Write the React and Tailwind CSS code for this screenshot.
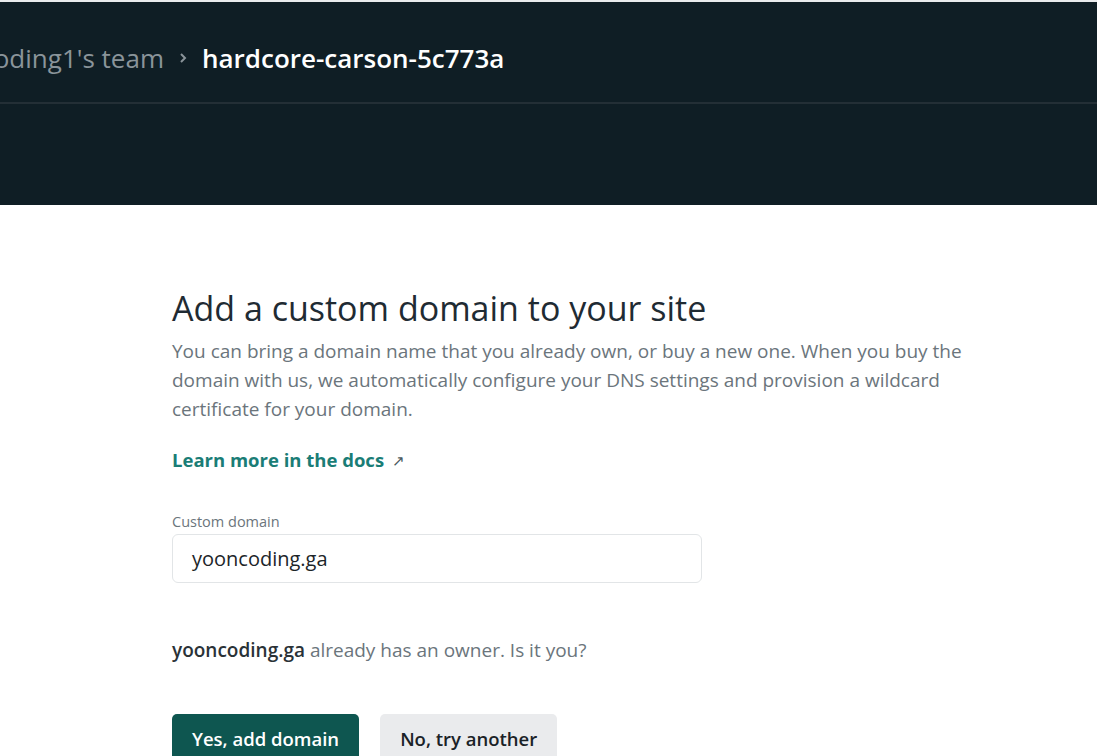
export default function App() {
  return (
    <div
      className="min-h-screen w-full bg-white overflow-hidden"
      style={{ fontFamily: '"Open Sans", "Noto Sans", sans-serif' }}
    >
      <div className="h-[2px] bg-[#e9ebed]" />
      <header className="bg-[#0f1e25]">
        <div className="flex h-[102px] items-center border-b-2 border-[#232f36] pt-[12px]">
          <div className="flex items-center gap-[14px] -ml-[79px] text-[26px] whitespace-nowrap">
            <span className="text-[#8a949a]">yooncoding1's team</span>
            <svg width="10" height="14" viewBox="0 0 10 14" className="text-[#8a949a]">
              <path d="M3 3 L7 7 L3 11" fill="none" stroke="currentColor" strokeWidth="2" />
            </svg>
            <span className="font-semibold text-white">hardcore-carson-5c773a</span>
          </div>
        </div>
        <div className="h-[101px]" />
      </header>

      <main className="pl-[172px] pt-[82px]">
        <h1 className="text-[34px] leading-[42px] text-[#1f2b33]">
          Add a custom domain to your site
        </h1>
        <p className="mt-[8px] max-w-[810px] text-[19px] leading-[29px] text-[#6b757c]">
          You can bring a domain name that you already own, or buy a new one. When you buy the
          domain with us, we automatically configure your DNS settings and provision a wildcard
          certificate for your domain.
        </p>
        <a className="mt-[23px] flex items-center gap-2 text-[18.5px] leading-[26px] font-bold text-[#1a7d76]">
          Learn more in the docs
          <span className="text-[15px] font-normal text-[#4a5a60]">↗</span>
        </a>

        <label className="mt-[39px] block text-[14.5px] leading-[20px] text-[#6b757c]">
          Custom domain
        </label>
        <div className="mt-[2px] flex h-[49px] w-[530px] items-center rounded-[6px] border border-[#e2e5e7] px-[19px] text-[20px] font-medium text-[#1c2529]">
          yooncoding.ga
        </div>

        <p className="mt-[54px] text-[19px] leading-[26px] text-[#6b757c]">
          <span className="font-semibold text-[#2a3237]">yooncoding.ga</span> already has an owner.
          Is it you?
        </p>

        <div className="mt-[51px] flex gap-[21px]">
          <button className="h-[50px] rounded-[5px] bg-[#0e5650] px-[20px] text-[18.5px] font-semibold text-white">
            Yes, add domain
          </button>
          <button className="h-[50px] rounded-[5px] bg-[#eaebed] px-[20px] text-[18.5px] font-semibold text-[#1a2227]">
            No, try another
          </button>
        </div>
      </main>
    </div>
  );
}
